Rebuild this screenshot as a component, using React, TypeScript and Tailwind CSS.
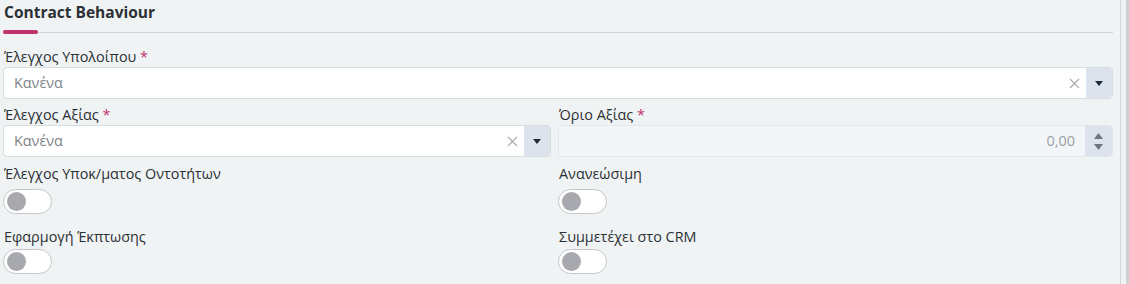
import { X } from 'lucide-react';

function Label({ text, required }: { text: string; required?: boolean }) {
  return (
    <div className="h-[20px] text-[14.4px] leading-[20px] text-[#2b3035] pl-[1px]">
      {text}
      {required && <span className="text-[#c0306a]"> *</span>}
    </div>
  );
}

function Select({ value }: { value: string }) {
  return (
    <div className="flex h-[32px] rounded-[4px] border border-[#d8dcdf] bg-white overflow-hidden">
      <div className="flex-1 flex items-center pl-[10px] text-[14.4px] text-[#7d8388]">{value}</div>
      <div className="w-[24px] flex items-center justify-center text-[#a4a8ac]">
        <X size={17} strokeWidth={1.5} />
      </div>
      <div className="w-[26px] bg-[#dde3ec] flex items-center justify-center">
        <svg width="8" height="5" viewBox="0 0 8 5">
          <path d="M0 0 L8 0 L4 5 Z" fill="#1d2b3a" />
        </svg>
      </div>
    </div>
  );
}

function NumberInput({ value }: { value: string }) {
  return (
    <div className="flex h-[32px] rounded-[4px] border border-[#e3e7ea] bg-[#f3f6f8] overflow-hidden">
      <div className="flex-1 flex items-center justify-end pr-[10px] text-[14.4px] text-[#9aa0a5]">{value}</div>
      <div className="w-[27px] bg-[#dde3ec] flex flex-col items-center justify-center gap-[5px]">
        <svg width="9" height="6" viewBox="0 0 9 6">
          <path d="M0 6 L9 6 L4.5 0 Z" fill="#6d7780" />
        </svg>
        <svg width="9" height="6" viewBox="0 0 9 6">
          <path d="M0 0 L9 0 L4.5 6 Z" fill="#6d7780" />
        </svg>
      </div>
    </div>
  );
}

function Toggle() {
  return (
    <div className="w-[49px] h-[25px] rounded-full border border-[#c4c7ca] bg-white flex items-center pl-[3px]">
      <div className="w-[19px] h-[19px] rounded-full bg-[#a8a9ae]" />
    </div>
  );
}

export default function App() {
  return (
    <div
      className="w-[1129px] h-[284px] bg-[#f0f3f4] flex overflow-hidden"
      style={{ fontFamily: '"Open Sans", "Noto Sans", sans-serif' }}
    >
      <div className="w-[1120px] pl-[3px] pr-[7px]">
        {/* Section header */}
        <div className="relative h-[35px]">
          <div className="pt-[1px] pl-[1px] text-[15.5px] font-bold leading-[22px] text-[#2b3035]">Contract Behaviour</div>
          <div className="absolute left-0 right-0 top-[32px] h-[1px] bg-[#d3d6d8]" />
          <div className="absolute left-0 top-[30px] w-[35px] h-[4px] rounded-full bg-[#c0306a]" />
        </div>

        <div className="pt-[12px]">
          <Label text="Έλεγχος Υπολοίπου" required />
          <Select value="Κανένα" />
        </div>

        <div className="grid grid-cols-[548px_1fr] gap-x-[7px] pt-[6px]">
          <div>
            <Label text="Έλεγχος Αξίας" required />
            <Select value="Κανένα" />
          </div>
          <div>
            <Label text="Όριο Αξίας" required />
            <NumberInput value="0,00" />
          </div>

          <div className="pt-[7px]">
            <Label text="Έλεγχος Υποκ/ματος Οντοτήτων" />
            <div className="pt-[5px]"><Toggle /></div>
          </div>
          <div className="pt-[7px]">
            <Label text="Ανανεώσιμη" />
            <div className="pt-[5px]"><Toggle /></div>
          </div>

          <div className="pt-[13px]">
            <Label text="Εφαρμογή Έκπτωσης" />
            <div className="pt-[2px]"><Toggle /></div>
          </div>
          <div className="pt-[13px]">
            <Label text="Συμμετέχει στο CRM" />
            <div className="pt-[2px]"><Toggle /></div>
          </div>
        </div>
      </div>
      <div className="w-[1px] bg-[#d4d7d9]" />
      <div className="w-[5px]" />
      <div className="w-[3px] bg-[#cdd1d3]" />
    </div>
  );
}
